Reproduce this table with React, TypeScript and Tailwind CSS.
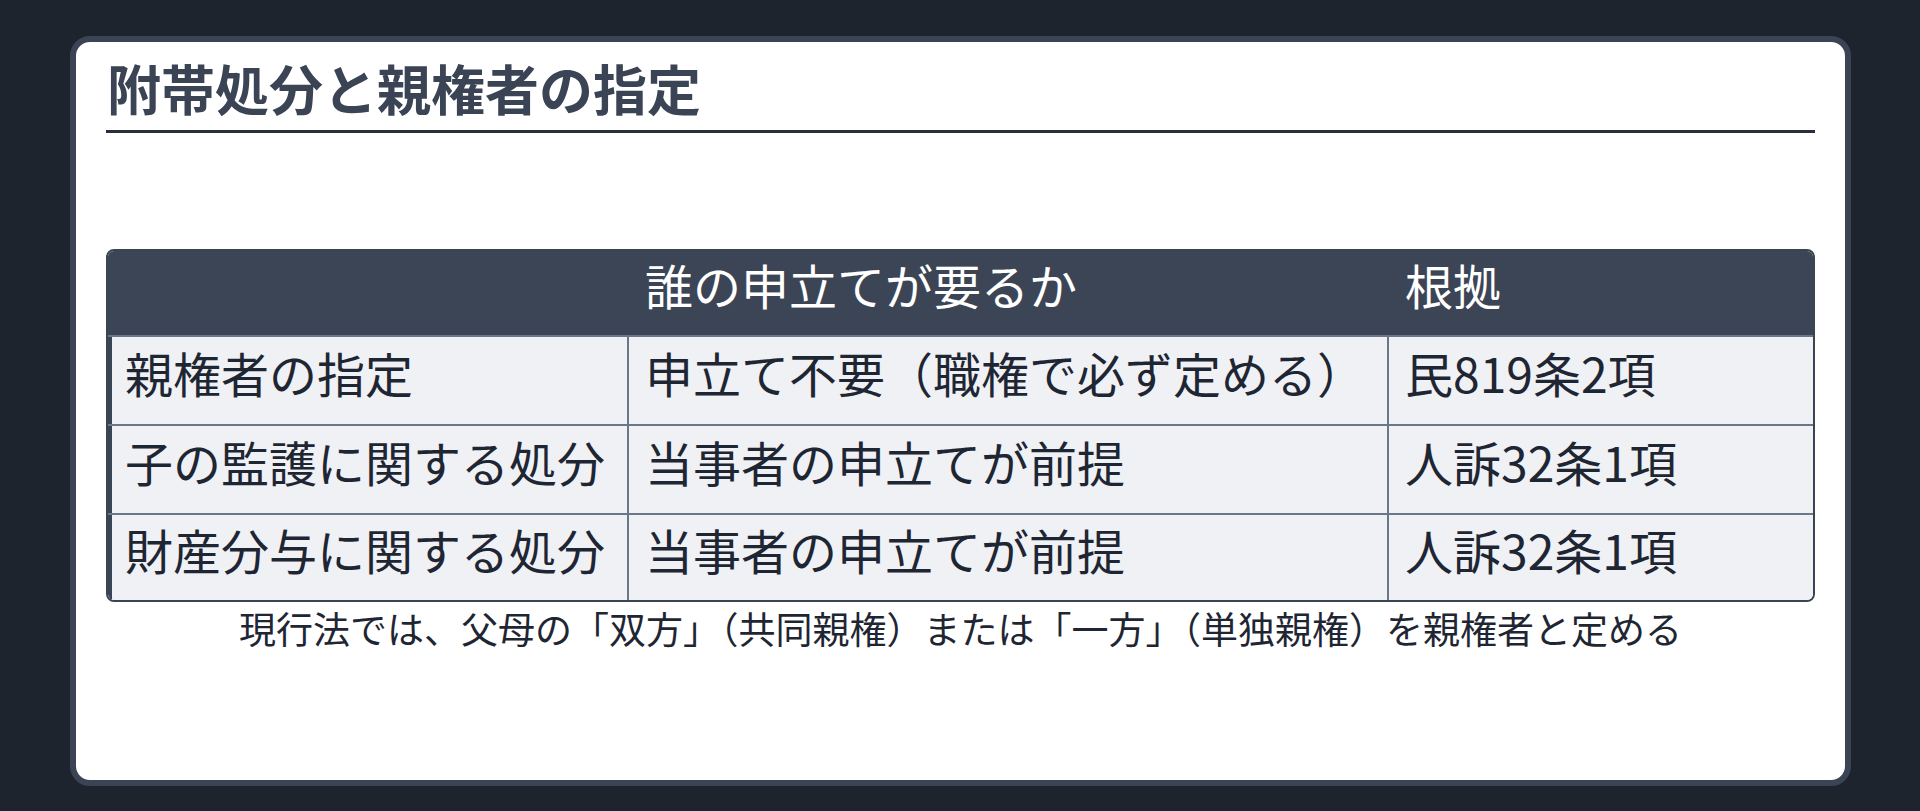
import React from "react";

const FONT = { fontFamily: '"Noto Sans CJK JP", "Noto Sans", sans-serif' };

const rows = [
  ["親権者の指定", "申立て不要（職権で必ず定める）", "民819条2項"],
  ["子の監護に関する処分", "当事者の申立てが前提", "人訴32条1項"],
  ["財産分与に関する処分", "当事者の申立てが前提", "人訴32条1項"],
];

export default function App() {
  return (
    <div className="w-full h-[811px] bg-[#1e242e] pt-[36px] pl-[70px] pr-[69px]" style={FONT}>
      <div className="h-[750px] rounded-[20px] border-[6px] border-[#3b4454] bg-white px-[30px] pt-[14px] flex flex-col">
        <div className="border-b-[3px] border-[#2a303b] pb-[9px] pl-[1px]">
          <h1 className="text-[54px] leading-[1.2] font-bold text-[#3b4454]">附帯処分と親権者の指定</h1>
        </div>

        <div className="mt-[116px] rounded-[8px] border-2 border-[#3b4454] overflow-hidden">
          <div className="grid grid-cols-[519px_760px_1fr] h-[84px] bg-[#3c4556] text-white text-[48px] leading-none">
            <div />
            <div className="flex items-center pl-[18px] pb-[18px] whitespace-nowrap">誰の申立てが要るか</div>
            <div className="flex items-center pl-[18px] pb-[18px] whitespace-nowrap">根拠</div>
          </div>
          {rows.map((r, i) => (
            <div
              key={i}
              className={`grid grid-cols-[519px_760px_1fr] bg-[#eff1f5] border-t-2 border-[#6b7788] text-[48px] leading-none text-[#1f2633] ${i === 2 ? "h-[87px]" : "h-[89px]"}`}
            >
              <div className="flex items-center border-l-4 border-[#3b4454] pl-[13px] pb-[16px] whitespace-nowrap">{r[0]}</div>
              <div className="flex items-center border-l-2 border-[#6b7788] pl-[16px] pb-[16px] whitespace-nowrap">{r[1]}</div>
              <div className="flex items-center border-l-2 border-[#6b7788] pl-[16px] pb-[16px] whitespace-nowrap">{r[2]}</div>
            </div>
          ))}
        </div>

        <p className="mt-[0px] text-center text-[37px] leading-[1.45] text-[#1f2633] whitespace-nowrap">
          現行法では、父母の「双方」（共同親権）または「一方」（単独親権）を親権者と定める
        </p>
      </div>
    </div>
  );
}
